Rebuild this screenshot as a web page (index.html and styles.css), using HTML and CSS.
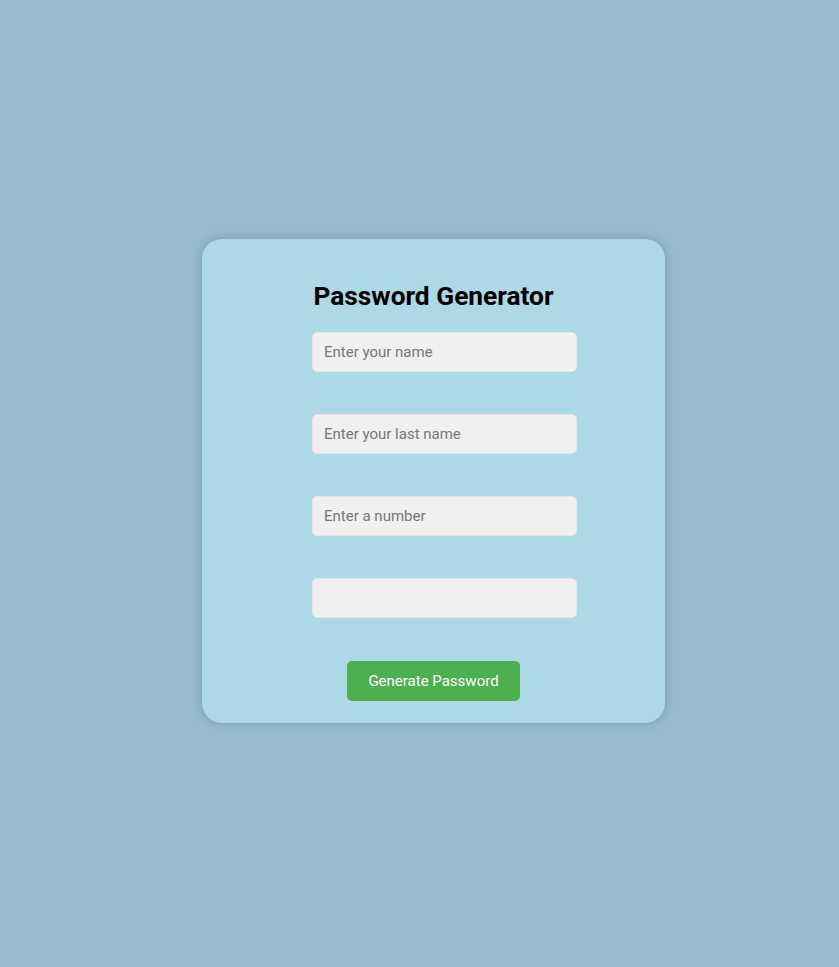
FILE: index.html
```html
<!DOCTYPE html>
<html lang="en">
<head>
<meta charset="UTF-8">
<title>Password Generator</title>
<link rel="stylesheet" href="styles.css">
</head>
<body>
<div class="card">
  <h2 class="title">Password Generator</h2>
  <form class="form">
    <input class="field" type="text" placeholder="Enter your name">
    <input class="field" type="text" placeholder="Enter your last name">
    <input class="field" type="text" placeholder="Enter a number">
    <input class="field" type="text" placeholder="">
    <button class="btn" type="button">Generate Password</button>
  </form>
</div>
</body>
</html>
```

FILE: styles.css
```css
html, body {
  margin: 0;
  padding: 0;
}
body {
  background: #96bccd;
  font-family: Roboto, "Liberation Sans", sans-serif;
  min-height: 967px;
  box-sizing: border-box;
  display: flex;
  align-items: center;
  justify-content: center;
  padding-left: 28px;
  padding-bottom: 5px;
}
.card {
  width: 463px;
  box-sizing: border-box;
  background: #add8e6;
  border-radius: 20px;
  box-shadow: 0 0 10px rgba(0, 0, 0, 0.18);
  padding: 20px 0 22px;
  display: flex;
  flex-direction: column;
  align-items: center;
}
.title {
  margin: 22px 0 21px;
  font-size: 26.3px;
  line-height: 30px;
  font-weight: 700;
  color: #000;
}
.form {
  width: 243px;
  display: flex;
  flex-direction: column;
  align-items: flex-start;
}
.field {
  width: 265px;
  height: 40px;
  box-sizing: border-box;
  margin: 0 0 42px;
  padding: 0 11px;
  border: 1px solid #e6e6e6;
  border-radius: 5px;
  background: #f0f0f0;
  font-family: Roboto, "Liberation Sans", sans-serif;
  font-size: 15px;
  color: #333;
  outline: none;
}
.field::placeholder {
  color: #777;
}
.btn {
  align-self: center;
  width: 173px;
  height: 40px;
  margin-top: 1px;
  border: none;
  border-radius: 5px;
  background: #4caf50;
  color: #fff;
  font-family: Roboto, "Liberation Sans", sans-serif;
  font-size: 15px;
  cursor: pointer;
}
```
